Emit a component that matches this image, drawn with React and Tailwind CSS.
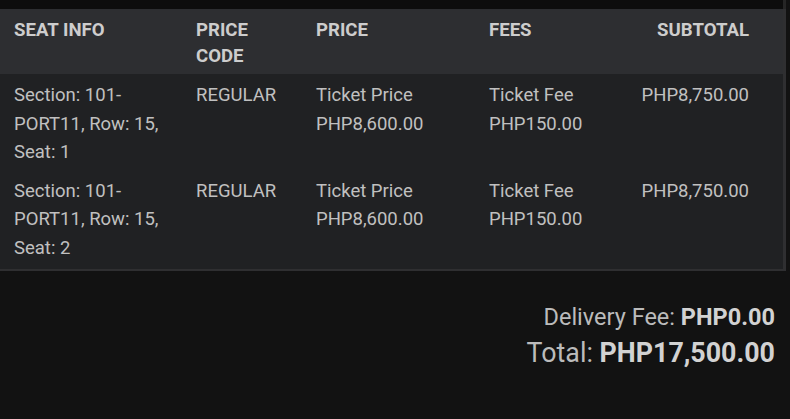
import React from 'react';

const rows = [
    { seat: ['Section: 101-', 'PORT11, Row: 15,', 'Seat: 1'], code: 'REGULAR', price: 'PHP8,600.00', fee: 'PHP150.00', subtotal: 'PHP8,750.00' },
    { seat: ['Section: 101-', 'PORT11, Row: 15,', 'Seat: 2'], code: 'REGULAR', price: 'PHP8,600.00', fee: 'PHP150.00', subtotal: 'PHP8,750.00' },
];

const App = () => {
    return (
        <div className="w-[790px] h-[419px] bg-[#121212] overflow-hidden" style={{ fontFamily: 'Roboto, "Liberation Sans", sans-serif' }}>
            {/* top strip */}
            <div className="h-[9px] bg-[#0d0d0d] w-[786px] border-r-[3px] border-[#262626]" />

            {/* Order table */}
            <div className="w-[786px] border-r-[3px] border-b-2 border-[#2f2f31]">
                <table className="w-full table-fixed border-collapse">
                    <colgroup>
                        <col className="w-[182px]" />
                        <col className="w-[120px]" />
                        <col className="w-[173px]" />
                        <col className="w-[140px]" />
                        <col />
                    </colgroup>
                    <thead>
                        <tr className="bg-[#2d2e31] text-[#cdcdcd] text-[18.6px] font-bold leading-[26px] align-top">
                            <th className="text-left pl-[14px] pr-[8px] pt-[8px] pb-[5px]">SEAT INFO</th>
                            <th className="text-left pl-[14px] pr-[8px] pt-[8px] pb-[5px]">PRICE CODE</th>
                            <th className="text-left pl-[14px] pr-[8px] pt-[8px] pb-[5px]">PRICE</th>
                            <th className="text-left pl-[14px] pr-[8px] pt-[8px] pb-[5px]">FEES</th>
                            <th className="text-right pr-[34px] pt-[8px] pb-[5px]">SUBTOTAL</th>
                        </tr>
                    </thead>
                    <tbody className="bg-[#202123] text-[#c0c0c0] text-[18.5px] leading-[28.5px]">
                        {rows.map((row, i) => (
                            <tr key={i} className="align-top">
                                <td className={`pl-[14px] pr-[4px] whitespace-nowrap ${i === 0 ? 'pt-[7px] pb-[3px]' : 'pt-[7px] pb-[7px]'}`}>
                                    {row.seat.map((line, j) => (
                                        <div key={j}>{line}</div>
                                    ))}
                                </td>
                                <td className="pl-[14px] pr-[8px] pt-[7px]">{row.code}</td>
                                <td className="pl-[14px] pr-[8px] pt-[7px] whitespace-nowrap">
                                    <div>Ticket Price</div>
                                    <div>{row.price}</div>
                                </td>
                                <td className="pl-[14px] pr-[8px] pt-[7px] whitespace-nowrap">
                                    <div>Ticket Fee</div>
                                    <div>{row.fee}</div>
                                </td>
                                <td className="text-right pr-[34px] pt-[7px]">{row.subtotal}</td>
                            </tr>
                        ))}
                    </tbody>
                </table>
            </div>

            {/* Totals */}
            <div className="flex flex-col items-end pr-[15px] pt-[29px] text-[#bbbbbb]">
                <p className="text-[23.5px] leading-[34px]">
                    Delivery Fee: <span className="font-bold text-[#d2d2d2]">PHP0.00</span>
                </p>
                <p className="text-[26.8px] leading-[38px]">
                    Total: <span className="font-bold text-[#d2d2d2]">PHP17,500.00</span>
                </p>
            </div>
        </div>
    );
};

export default App;
